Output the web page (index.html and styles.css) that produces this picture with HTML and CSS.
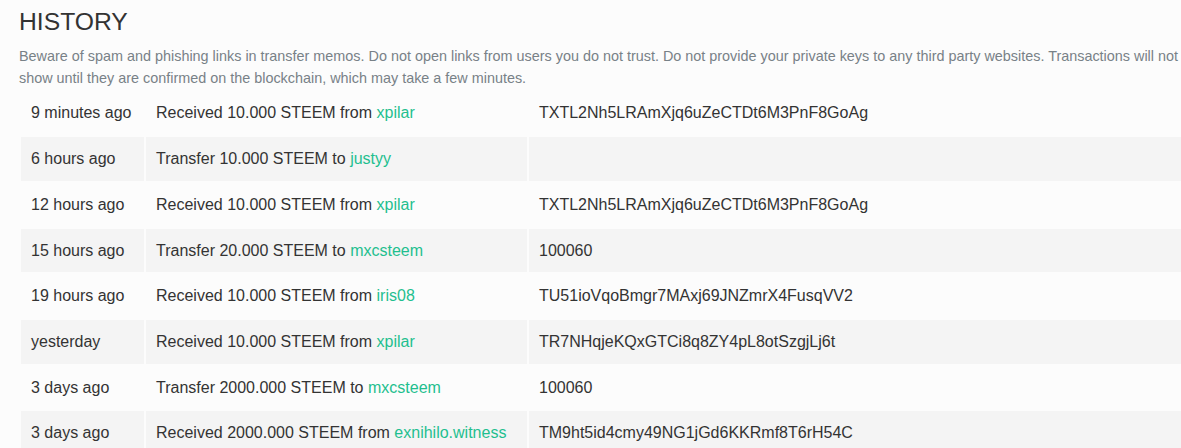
FILE: index.html
```html
<!DOCTYPE html>
<html lang="en">
<head>
    <meta charset="UTF-8">
    <title>History</title>
    <link rel="stylesheet" href="styles.css">
</head>
<body>
    <div class="history">
        <h1 class="history-title">HISTORY</h1>
        <p class="history-note">Beware of spam and phishing links in transfer memos. Do not open links from users you do not trust. Do not provide your private keys to any third party websites. Transactions will not show until they are confirmed on the blockchain, which may take a few minutes.</p>

        <table class="history-table">
            <tbody>
                <tr>
                    <td class="col-time">9 minutes ago</td>
                    <td class="col-op">Received 10.000 STEEM from <a href="#">xpilar</a></td>
                    <td class="col-memo">TXTL2Nh5LRAmXjq6uZeCTDt6M3PnF8GoAg</td>
                </tr>
                <tr>
                    <td class="col-time">6 hours ago</td>
                    <td class="col-op">Transfer 10.000 STEEM to <a href="#">justyy</a></td>
                    <td class="col-memo"></td>
                </tr>
                <tr>
                    <td class="col-time">12 hours ago</td>
                    <td class="col-op">Received 10.000 STEEM from <a href="#">xpilar</a></td>
                    <td class="col-memo">TXTL2Nh5LRAmXjq6uZeCTDt6M3PnF8GoAg</td>
                </tr>
                <tr>
                    <td class="col-time">15 hours ago</td>
                    <td class="col-op">Transfer 20.000 STEEM to <a href="#">mxcsteem</a></td>
                    <td class="col-memo">100060</td>
                </tr>
                <tr>
                    <td class="col-time">19 hours ago</td>
                    <td class="col-op">Received 10.000 STEEM from <a href="#">iris08</a></td>
                    <td class="col-memo">TU51ioVqoBmgr7MAxj69JNZmrX4FusqVV2</td>
                </tr>
                <tr>
                    <td class="col-time">yesterday</td>
                    <td class="col-op">Received 10.000 STEEM from <a href="#">xpilar</a></td>
                    <td class="col-memo">TR7NHqjeKQxGTCi8q8ZY4pL8otSzgjLj6t</td>
                </tr>
                <tr>
                    <td class="col-time">3 days ago</td>
                    <td class="col-op">Transfer 2000.000 STEEM to <a href="#">mxcsteem</a></td>
                    <td class="col-memo">100060</td>
                </tr>
                <tr>
                    <td class="col-time">3 days ago</td>
                    <td class="col-op">Received 2000.000 STEEM from <a href="#">exnihilo.witness</a></td>
                    <td class="col-memo">TM9ht5id4cmy49NG1jGd6KKRmf8T6rH54C</td>
                </tr>
            </tbody>
        </table>
    </div>
</body>
</html>
```

FILE: styles.css
```css
html,
body {
    overflow: hidden;
}

body {
    margin: 0;
    padding: 0;
    background: #fcfcfc;
    font-family: 'Liberation Sans', Arial, sans-serif;
    color: #333333;
}

.history {
    width: 1180px;
    padding: 9px 0 0 19px;
}

.history-title {
    margin: 0;
    font-size: 24.7px;
    font-weight: normal;
    line-height: 26.4px;
    color: #333333;
}

.history-note {
    margin: 10px 0 0;
    font-size: 14.4px;
    line-height: 22px;
    color: #788187;
}

.history-table {
    width: 1400px;
    border-collapse: separate;
    border-spacing: 2px;
    font-size: 16px;
    line-height: 25.7px;
}

.history-table td {
    padding: 9px 10px;
    white-space: nowrap;
    vertical-align: middle;
}

.history-table tr:nth-child(even) td {
    background: #f4f4f4;
}

.col-time {
    width: 103px;
}

.col-op {
    width: 361px;
}

.history-table a {
    color: #1fbf8f;
    text-decoration: none;
}
```
